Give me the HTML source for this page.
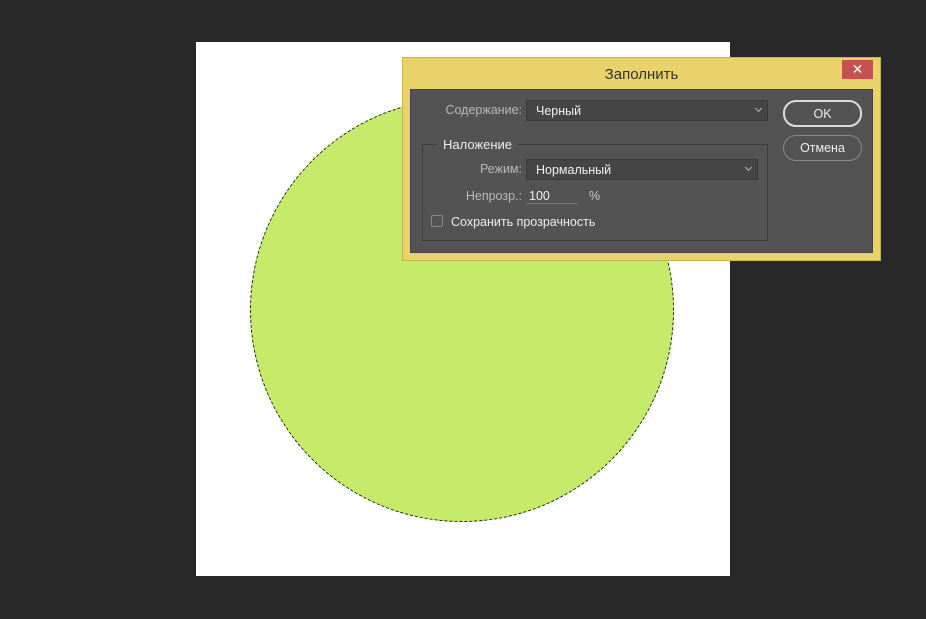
<!DOCTYPE html><html><head><style>
body{margin:0;width:926px;height:619px;background:#282828;position:relative;overflow:hidden;font-family:"Liberation Sans",sans-serif;font-size:12.5px}
.a{position:absolute}
.lbl{color:#b8b8b8;text-align:right}
.dd{background:#454545;border:1px solid #3a3a3a;color:#f0f0f0;box-sizing:border-box;padding:3px 0 0 9px}
.dd:after{content:"";position:absolute;right:6px;top:5px;width:4px;height:4px;border-right:1px solid #bbb;border-bottom:1px solid #bbb;transform:rotate(45deg)}
.btn{border:1px solid #bdbdbd;border-radius:13px;box-sizing:border-box;color:#eee;text-align:center}
</style></head><body>
<div class="a" style="left:196px;top:42px;width:534px;height:534px;background:#fff"></div>
<div class="a" style="left:250px;top:98px;width:424px;height:424px;border-radius:50%;background:#c6eb6b;box-sizing:border-box;border:1px dashed #222"></div>
<div class="a" style="left:403px;top:58px;width:477px;height:202px;background:#ead26a;box-shadow:0 0 0 1px #c9b050"></div>
<div class="a" style="left:842px;top:60px;width:31px;height:19px;background:#c75050;color:#fff;text-align:center;font-size:14px;line-height:19px">✕</div>
<div class="a" style="left:403px;top:66px;width:477px;text-align:center;font-size:15px;color:#333">Заполнить</div>
<div class="a" style="left:410px;top:89px;width:463px;height:164px;background:#535353;border:1px solid #444;box-sizing:border-box"></div>
<div class="a lbl" style="left:420px;top:103px;width:102px">Содержание:</div>
<div class="a dd" style="left:526px;top:100px;width:242px;height:21px">Черный</div>
<div class="a btn" style="left:783px;top:100px;width:79px;height:27px;line-height:25px;border-width:2px;border-color:#ddd">OK</div>
<div class="a btn" style="left:783px;top:135px;width:79px;height:26px;line-height:24px;border-color:#888">Отмена</div>
<div class="a" style="left:422px;top:144px;width:346px;height:97px;border:1px solid #3e3e3e;box-sizing:border-box"></div>
<div class="a" style="left:437px;top:137px;padding:0 6px;background:#535353;color:#eee;font-size:13px">Наложение</div>
<div class="a lbl" style="left:420px;top:162px;width:102px">Режим:</div>
<div class="a dd" style="left:526px;top:159px;width:232px;height:21px">Нормальный</div>
<div class="a lbl" style="left:420px;top:189px;width:102px">Непрозр.:</div>
<div class="a" style="left:526px;top:189px;width:52px;height:15px;border-bottom:1px solid #777;color:#f0f0f0;padding-left:3px;box-sizing:border-box">100</div>
<div class="a" style="left:589px;top:189px;color:#ccc">%</div>
<div class="a" style="left:431px;top:215px;width:12px;height:12px;border:1px solid #888;border-radius:2px;box-sizing:border-box"></div>
<div class="a" style="left:451px;top:215px;color:#eee">Сохранить прозрачность</div>
</body></html>
